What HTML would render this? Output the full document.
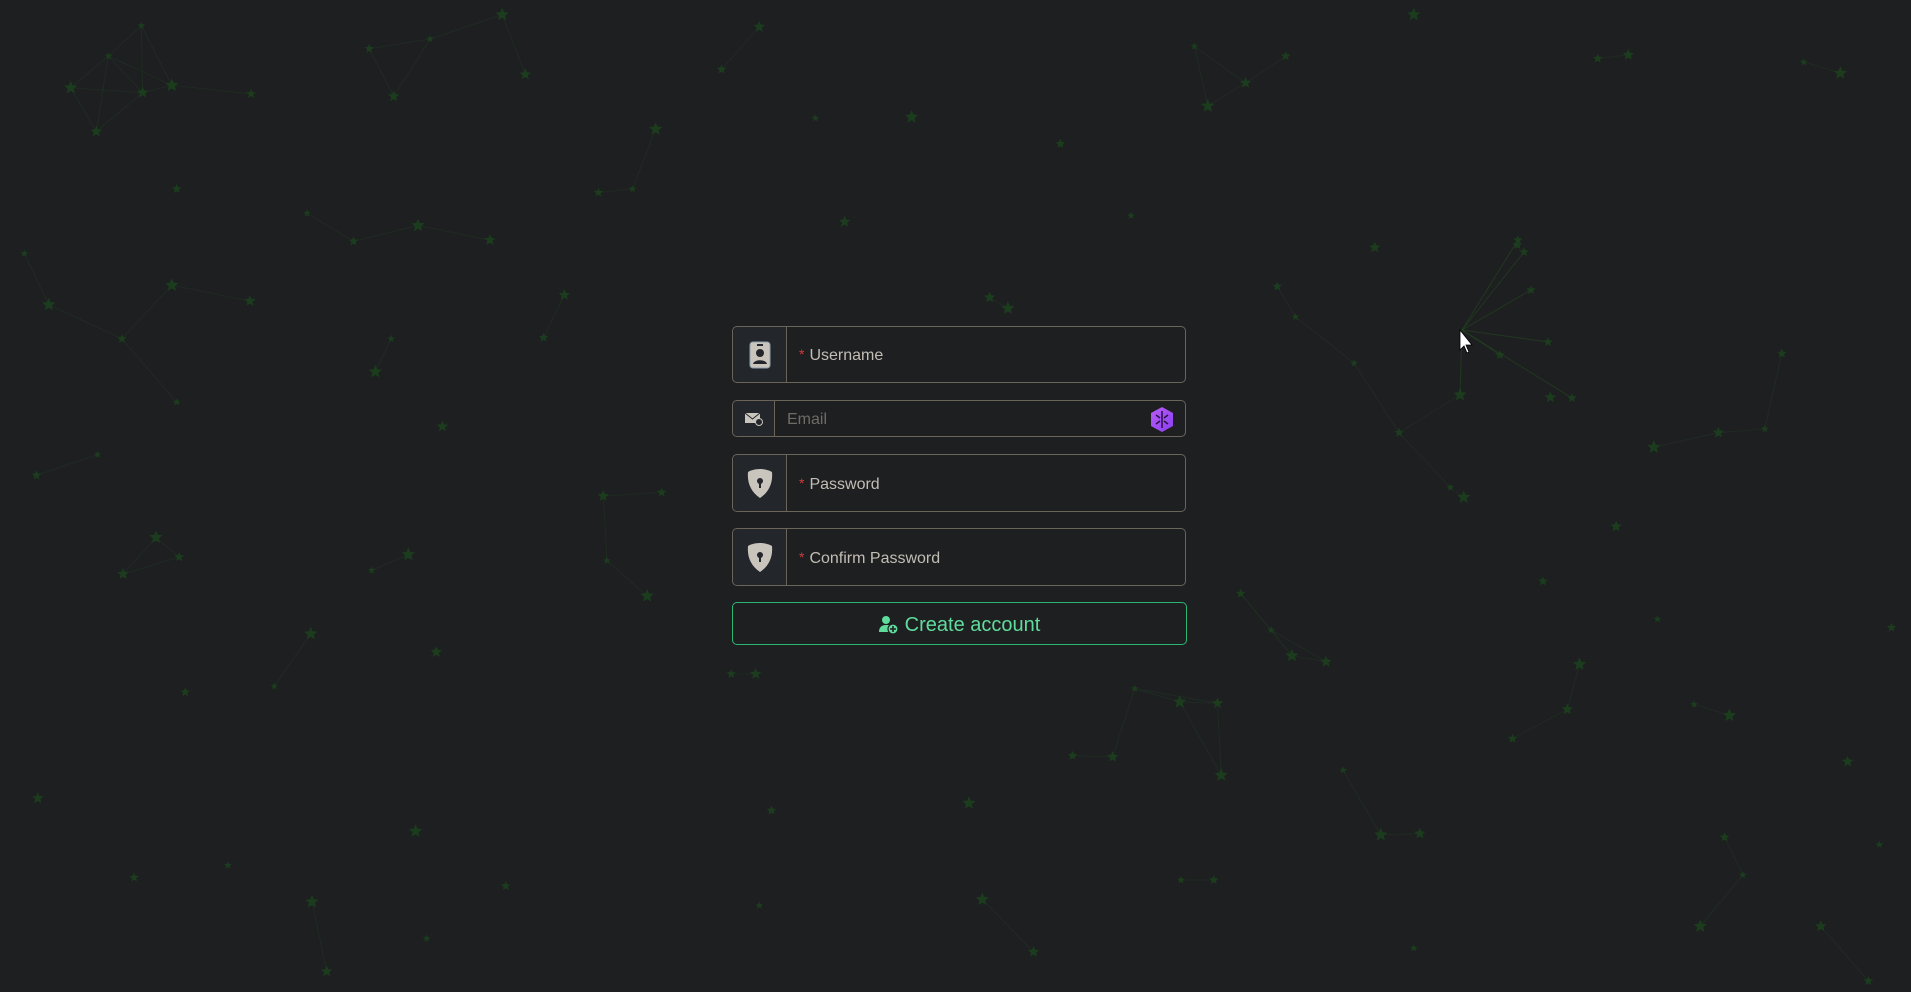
<!DOCTYPE html>
<html><head><meta charset="utf-8">
<style>
html,body{margin:0;padding:0;width:1911px;height:992px;overflow:hidden;background:#1e1f21;font-family:"Liberation Sans","DejaVu Sans",sans-serif;}
#bg{position:absolute;left:0;top:0}
.f{position:absolute;left:732px;width:454px;border:1px solid #6b6459;border-radius:5px;box-sizing:border-box;background:#1e1f21;}
.ic{position:absolute;left:0;top:0;bottom:0;width:53px;background:#23262a;border-right:1px solid #6b6459;border-radius:5px 0 0 5px;display:flex;align-items:center;justify-content:center}
.lb{position:absolute;left:66px;top:3px;bottom:0;display:flex;align-items:center;color:#c2bdb5;font-size:16px}
.lb b{color:#d23a3a;font-weight:normal;margin-right:5px;font-size:14px;position:relative;top:-2px}
.btn{position:absolute;left:732px;top:602px;width:455px;height:43px;padding-top:3px;border:1px solid #2bb673;border-radius:5px;box-sizing:border-box;color:#5fdc9c;font-size:20px;display:flex;align-items:center;justify-content:center;gap:6px}
</style></head><body>
<svg id="bg" width="1911" height="992"></svg>
<div class="f" style="top:326px;height:57px"><div class="ic">
<svg width="22" height="28" viewBox="0 0 22 28"><rect x="1" y="1" width="20" height="26" rx="3" fill="#c9c4bc" stroke="#8fa3b3"/><rect x="8" y="3" width="6" height="2" fill="#23262a"/><circle cx="11" cy="12" r="4" fill="#23262a"/><path d="M4 23c1-5 13-5 14 0z" fill="#23262a"/></svg>
</div><div class="lb"><b>*</b>Username</div></div>
<div class="f" style="top:400px;height:37px"><div class="ic" style="width:41px">
<svg width="18" height="14" viewBox="0 0 18 14"><rect x="0" y="1" width="15" height="10" fill="#c9c4bc"/><path d="M0 1l7.5 6 7.5-6" stroke="#23262a" fill="none"/><circle cx="14" cy="10" r="3.5" fill="#23262a" stroke="#c9c4bc"/></svg>
</div><div class="lb" style="left:54px;color:#6f6b65;font-size:16px">Email</div>
<svg style="position:absolute;right:11px;top:6px" width="24" height="25" viewBox="0 0 24 25"><defs><linearGradient id="g" x1="0" y1="0" x2="1" y2="1"><stop offset="0" stop-color="#b85cf5"/><stop offset="1" stop-color="#8a3ff0"/></linearGradient></defs><path d="M12 0l11 6v13l-11 6-11-6V6z" fill="url(#g)"/><path d="M12 4v17M6 8l4 3M6 17l4-3M18 8l-4 3M18 17l-4-3" stroke="#2a0f45" stroke-width="1.5"/></svg>
</div>
<div class="f" style="top:454px;height:58px"><div class="ic">
<svg width="26" height="29" viewBox="0 0 26 29"><path d="M13 0C8 0 3 1.5 1 3c-1 11 3 20 12 26 9-6 13-15 12-26C23 1.5 18 0 13 0z" fill="#c9c4bc"/><circle cx="13" cy="12" r="3" fill="#23262a"/><rect x="12" y="13" width="2" height="6" fill="#23262a"/></svg>
</div><div class="lb"><b>*</b>Password</div></div>
<div class="f" style="top:528px;height:58px"><div class="ic">
<svg width="26" height="29" viewBox="0 0 26 29"><path d="M13 0C8 0 3 1.5 1 3c-1 11 3 20 12 26 9-6 13-15 12-26C23 1.5 18 0 13 0z" fill="#c9c4bc"/><circle cx="13" cy="12" r="3" fill="#23262a"/><rect x="12" y="13" width="2" height="6" fill="#23262a"/></svg>
</div><div class="lb"><b>*</b>Confirm Password</div></div>
<div class="btn"><svg width="20" height="20" viewBox="0 0 20 20"><circle cx="7" cy="5" r="4" fill="#5fdc9c"/><path d="M0 17c0-5 3-7 7-7s5 1 6 2v5z" fill="#5fdc9c"/><circle cx="14" cy="14" r="5" fill="#5fdc9c" stroke="#1e1f21" stroke-width="1.2"/><path d="M14 11v6M11 14h6" stroke="#1e1f21" stroke-width="1.6"/></svg>Create account</div>
<script>
var P=[[116,21],[141,70],[117,76],[206,77],[89,46],[58,72],[79,108],[145,155],[252,175],[343,185],[402,197],[290,198],[20,208],[141,234],[205,247],[100,278],[145,330],[40,250],[363,350],[30,390],[80,373],[128,441],[101,471],[147,457],[305,468],[335,455],[358,535],[152,568],[225,563],[255,520],[31,655],[110,720],[187,710],[256,740],[268,797],[415,727],[350,770],[341,682],[323,79],[303,40],[353,32],[412,12],[431,61],[491,158],[519,155],[538,106],[463,242],[446,277],[321,278],[308,305],[495,407],[543,404],[498,460],[531,489],[623,22],[592,57],[669,97],[748,96],[693,182],[870,118],[928,177],[991,87],[1022,68],[1055,46],[980,38],[1160,12],[1336,45],[1311,48],[1480,51],[1510,60],[1128,203],[1245,201],[1111,298],[1198,324],[1272,326],[1148,355],[1190,400],[1201,408],[1326,432],[1462,290],[1448,352],[1357,367],[1410,355],[1048,235],[1063,260],[827,253],[812,244],[1018,487],[1043,517],[1060,538],[1088,543],[1266,477],[1360,508],[1296,545],[1286,582],[1241,606],[1390,578],[1419,587],[1516,625],[1552,515],[1160,778],[1133,685],[1165,684],[1415,687],[1430,718],[1395,760],[1494,760],[1533,805],[1102,632],[1002,636],[913,621],[880,620],[931,565],[968,576],[999,577],[633,665],[623,743],[806,738],[848,781],[996,722],[969,722],[795,659],[620,553],[600,553],[1542,693]];
var s='';var k=1911/1568;
function star(x,y,r){var d='';for(var i=0;i<10;i++){var a=Math.PI/5*i-Math.PI/2,rr=i%2?r*0.45:r;d+=(i?'L':'M')+(x+rr*Math.cos(a)).toFixed(1)+' '+(y+rr*Math.sin(a)).toFixed(1);}return '<path d="'+d+'Z" fill="#1c3c1e"/>';}
for(var i=0;i<P.length;i++){for(var j=0;j<i;j++){var dx=P[i][0]-P[j][0],dy=P[i][1]-P[j][1];if(dx*dx+dy*dy<70*70){s+='<line x1="'+P[j][0]*k+'" y1="'+P[j][1]*k+'" x2="'+P[i][0]*k+'" y2="'+P[i][1]*k+'" stroke="#203322" stroke-width="1" opacity="0.6"/>';}}}
for(var i=0;i<P.length;i++){s+=star(P[i][0]*k,P[i][1]*k,4+(i*7%4));}
var c=[1462,330];
[[1518,240],[1524,252],[1500,355],[1460,395],[1531,290],[1548,342],[1572,398]].forEach(function(p){s+='<line x1="'+c[0]+'" y1="'+c[1]+'" x2="'+p[0]+'" y2="'+p[1]+'" stroke="#24481f" opacity="0.6"/>'+star(p[0],p[1],5);});
s+='<path d="M1460 330v20l4-4 3 7 2-1-3-7h6z" fill="#fff" stroke="#000" stroke-width="0.8"/>';
document.getElementById('bg').innerHTML=s;
</script>
</body></html>
